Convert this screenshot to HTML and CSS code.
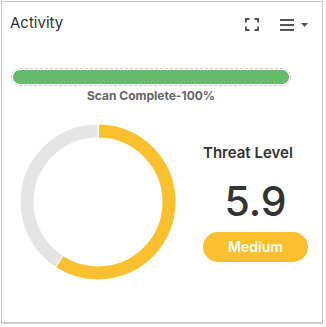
FILE: index.html
```html
<!DOCTYPE html>
<html lang="en">
<head>
    <meta charset="UTF-8">
    <title>Activity</title>
    <link rel="stylesheet" href="styles.css">
</head>
<body>
<div class="card">
    <div class="card_head">
        <span class="card_title">Activity</span>
        <div class="card_tools">
            <svg class="tool_full" width="14" height="13" viewBox="0 0 14 13">
                <path d="M1 4.5V1h3.5M9.5 1H13v3.5M13 8.5V12H9.5M4.5 12H1V8.5" fill="none" stroke="#555" stroke-width="2"/>
            </svg>
            <svg class="tool_menu" width="14" height="12" viewBox="0 0 14 12">
                <rect x="0" y="0" width="14" height="2" fill="#555"/>
                <rect x="0" y="5" width="14" height="2" fill="#555"/>
                <rect x="0" y="10" width="14" height="2" fill="#555"/>
            </svg>
            <svg class="tool_caret" width="7" height="4" viewBox="0 0 7 4">
                <path d="M0 0H7L3.5 4Z" fill="#555"/>
            </svg>
        </div>
    </div>

    <div class="scan">
        <div class="scan_bar">
            <div class="scan_fill"></div>
        </div>
        <div class="scan_text">Scan Complete-100%</div>
    </div>

    <div class="threat">
        <svg class="donut" width="156" height="156" viewBox="0 0 156 156">
            <!-- 5.9 of 10 -->
            <circle cx="78" cy="78" r="71" fill="none" stroke="#e5e5e5" stroke-width="13"
                    stroke-dasharray="181 265" stroke-dashoffset="-264" transform="rotate(-90 78 78)"/>
            <circle cx="78" cy="78" r="71" fill="none" stroke="#fbc02d" stroke-width="13"
                    stroke-dasharray="262 184" stroke-dashoffset="-1" transform="rotate(-90 78 78)"/>
        </svg>
        <div class="threat_info">
            <div class="threat_label">Threat Level</div>
            <div class="threat_value">5.9</div>
            <div class="threat_badge">Medium</div>
        </div>
    </div>
</div>
</body>
</html>
```

FILE: styles.css
```css
* {
    margin: 0;
    padding: 0;
    box-sizing: border-box;
}

body {
    padding: 1px;
    background: #fff;
    font-family: Inter, "Noto Sans", sans-serif;
}

.card {
    width: 322px;
    height: 322px;
    border: 1px solid #c6c6c6;
    box-shadow: 0 1px 0 #d4d4d4;
    background: #fff;
}

.card_head {
    display: flex;
    justify-content: space-between;
    align-items: flex-start;
    padding: 11px 14px 0 8px;
    height: 32px;
}

.card_title {
    font-size: 15px;
    line-height: 20px;
    color: #333;
}

.card_tools {
    display: flex;
    align-items: center;
    padding-top: 5px;
}

.tool_full {
    display: block;
}

.tool_menu {
    display: block;
    margin-left: 21px;
}

.tool_caret {
    display: block;
    margin-left: 7px;
}

.scan {
    width: 280px;
    margin: 34px 0 0 9px;
}

.scan_bar {
    height: 18px;
    border: 1px dashed #cfcfcf;
    border-radius: 9px;
    padding: 1px;
}

.scan_fill {
    height: 100%;
    border-radius: 7px;
    background: #66bb6a;
}

.scan_text {
    margin-top: 2px;
    text-align: center;
    font-size: 12px;
    line-height: 15px;
    font-weight: 700;
    color: #666;
}

.threat {
    display: flex;
    align-items: flex-start;
    margin-top: 21px;
    padding-left: 18px;
}

.donut {
    display: block;
}

.threat_info {
    width: 105px;
    margin: 19px 0 0 27px;
    display: flex;
    flex-direction: column;
    align-items: flex-start;
}

.threat_label {
    font-size: 15px;
    line-height: 20px;
    font-weight: 600;
    color: #333;
}

.threat_value {
    width: 100%;
    margin-top: 18px;
    text-align: center;
    font-size: 41px;
    line-height: 41px;
    font-weight: 500;
    color: #333;
}

.threat_badge {
    width: 105px;
    height: 30px;
    margin-top: 10px;
    border-radius: 15px;
    background: #fbc02d;
    color: #fff;
    font-size: 14px;
    font-weight: 600;
    line-height: 30px;
    text-align: center;
}
```
